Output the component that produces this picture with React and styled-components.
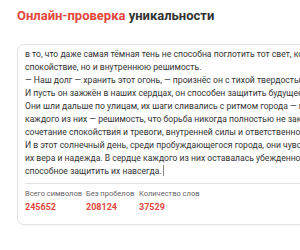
import React from 'react';
import styled, { createGlobalStyle } from 'styled-components';

const GlobalStyle = createGlobalStyle`
    body {
        margin: 0;
        background: #ffffff;
        font-family: Roboto, "Liberation Sans", sans-serif;
        overflow: hidden;
    }
`

const Page = styled.div`
    width: 360px;
    padding: 8px 0 0 17px;
`

const Title = styled.h2`
    margin: 0;
    font-size: 13px;
    font-weight: 700;
    line-height: 16px;
    color: #333333;
    white-space: nowrap;

    span {
        color: #e2463c;
    }
`

const Card = styled.div`
    margin-top: 20px;
    border: 1px solid #e4e4e4;
    border-radius: 7px;
    padding: 3px 0 11px 7px;
    box-shadow: 0 1px 2px rgba(0, 0, 0, 0.04);
`

const TextArea = styled.div`
    font-size: 8.6px;
    line-height: 13px;
    color: #333333;
    padding-bottom: 5px;
`

const Line = styled.div`
    white-space: nowrap;
`

const Caret = styled.span`
    display: inline-block;
    width: 1px;
    height: 11px;
    background: #888888;
    vertical-align: -2px;
    margin-left: 1px;
`

const Stats = styled.div`
    display: flex;
    border-top: 1px solid #e2e2e2;
    padding-top: 5px;
`

const Stat = styled.div`
    width: ${props => props.width}px;
    display: flex;
    flex-direction: column;
    gap: 2px;
`

const Label = styled.div`
    font-size: 7.5px;
    line-height: 10px;
    color: #666666;
    white-space: nowrap;
`

const Value = styled.div`
    font-size: 9px;
    font-weight: 700;
    line-height: 12px;
    color: #e2463c;
`

const SubTitle = styled(Title)`
    margin-top: 22px;
`

const lines = [
    "в то, что даже самая тёмная тень не способна поглотить тот свет, который",
    "спокойствие, но и внутреннюю решимость.",
    "— Наш долг — хранить этот огонь, — произнёс он с тихой твердостью.",
    "И пусть он зажжён в наших сердцах, он способен защитить будущее.",
    "Они шли дальше по улицам, их шаги сливались с ритмом города — в",
    "каждого из них — решимость, что борьба никогда полностью не закончится",
    "сочетание спокойствия и тревоги, внутренней силы и ответственности.",
    "И в этот солнечный день, среди пробуждающегося города, они чувствовали",
    "их вера и надежда. В сердце каждого из них оставалась убежденность",
]

function App() {
    return (<>
        <GlobalStyle />
        <Page>
            <Title><span>Онлайн-проверка</span> уникальности</Title>
            <Card>
                <TextArea>
                    {lines.map((l, i) => <Line key={i}>{l}</Line>)}
                    <Line>способное защитить их навсегда.<Caret /></Line>
                </TextArea>
                <Stats>
                    <Stat width={61}>
                        <Label>Всего символов</Label>
                        <Value>245652</Value>
                    </Stat>
                    <Stat width={53}>
                        <Label>Без пробелов</Label>
                        <Value>208124</Value>
                    </Stat>
                    <Stat width={80}>
                        <Label>Количество слов</Label>
                        <Value>37529</Value>
                    </Stat>
                </Stats>
            </Card>
            <SubTitle><span>Описание</span> сервиса</SubTitle>
        </Page>
    </>)
}

export default App
